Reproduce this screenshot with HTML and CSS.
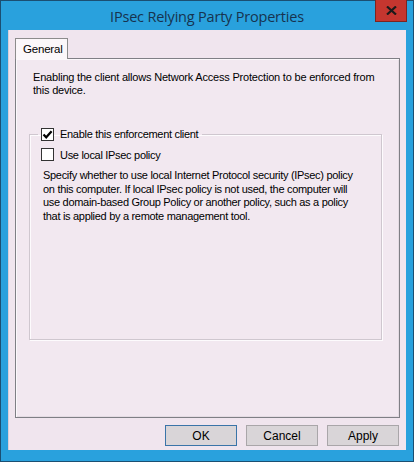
FILE: index.html
```html
<!DOCTYPE html>
<html>
<head>
<meta charset="utf-8">
<link rel="stylesheet" href="styles.css">
</head>
<body>
<div class="window">
  <div class="titlebar">
    <span class="title">IPsec Relying Party Properties</span>
    <div class="close"><svg width="11" height="9" viewBox="0 0 11 9"><path d="M1 0.5 L10 8.5 M10 0.5 L1 8.5" stroke="#1a1a1a" stroke-width="2.2"/></svg></div>
  </div>
  <div class="client">
    <div class="tabs"><div class="tab">General</div></div>
    <div class="panel">
      <p class="intro">Enabling the client allows Network Access Protection to be enforced from<br>this device.</p>
      <fieldset class="group">
        <legend class="legend"><span class="cb checked"><svg width="11" height="11" viewBox="0 0 11 11"><path d="M1.5 5.5 L4.2 8.3 L9.6 2.2" fill="none" stroke="#000" stroke-width="2.2"/></svg></span><span>Enable this enforcement client</span></legend>
        <div class="row"><span class="cb"></span><span>Use local IPsec policy</span></div>
        <p class="desc">Specify whether to use local Internet Protocol security (IPsec) policy<br>on this computer. If local IPsec policy is not used, the computer will<br>use domain-based Group Policy or another policy, such as a policy<br>that is applied by a remote management tool.</p>
      </fieldset>
    </div>
    <div class="buttons">
      <div class="btn default">OK</div>
      <div class="btn">Cancel</div>
      <div class="btn">Apply</div>
    </div>
  </div>
</div>
</body>
</html>
```
FILE: styles.css
```css
html, body {
  margin: 0;
  padding: 0;
  background: #2aa0dc;
}
.window {
  width: 414px;
  height: 462px;
  box-sizing: border-box;
  background: #29a1dd;
  border: 1px solid #1b4f72;
  display: flex;
  flex-direction: column;
  font-family: "Liberation Sans", Arial, sans-serif;
  font-size: 11px;
  letter-spacing: -0.3px;
  color: #000;
}
.titlebar {
  position: relative;
  height: 29px;
  display: flex;
  align-items: center;
  justify-content: center;
}
.title {
  font-family: "Open Sans", "Noto Sans", sans-serif;
  font-size: 14.5px;
  letter-spacing: -0.2px;
  color: #17334f;
  margin-top: 1px;
}
.close {
  position: absolute;
  right: 6px;
  top: -1px;
  width: 32px;
  height: 22px;
  box-sizing: border-box;
  background: #c4362f;
  border: 1px solid #7d2420;
  border-top: none;
  display: flex;
  align-items: center;
  justify-content: center;
}
.client {
  margin: 0 7px;
  height: 420px;
  background: #f0e5ee;
  padding: 8px 6px 0 6px;
  box-sizing: border-box;
  display: flex;
  flex-direction: column;
  border-left: 1px solid #d9cfd8;
}
.tabs {
  display: flex;
  height: 20px;
  position: relative;
  z-index: 1;
}
.tab {
  width: 53px;
  height: 21px;
  box-sizing: border-box;
  background: #fbf7fa;
  border: 1px solid #8c8c8c;
  border-bottom: none;
  padding: 4px 0 0 7px;
  font-size: 11.5px;
  letter-spacing: -0.2px;
}
.panel {
  height: 360px;
  box-sizing: border-box;
  border: 1px solid #7f7f85;
  background: #f2e8f0;
  box-shadow: inset 1px 1px 0 #fbf8fb, inset -1px -1px 0 #e4dbe3;
  padding: 12px 16px 0 17px;
}
.intro {
  margin: 0;
  line-height: 13px;
  white-space: nowrap;
  letter-spacing: -0.2px;
}
.group {
  margin: 30px 1px 0 -4px;
  padding: 0;
  height: 213px;
  box-sizing: border-box;
  border: 1px solid #cfc7cf;
  box-shadow: 1px 1px 0 #fdfbfd, inset 1px 1px 0 #fdfbfd;
}
.legend {
  margin-left: 8px;
  padding: 0 4px 0 3px;
  display: flex;
  align-items: center;
  gap: 6px;
  height: 14px;
}
.cb {
  width: 13px;
  height: 13px;
  box-sizing: border-box;
  border: 1px solid #333;
  background: #fff;
  display: inline-flex;
  align-items: center;
  justify-content: center;
}
.row {
  margin: 7px 0 0 11px;
  display: flex;
  align-items: center;
  gap: 6px;
}
.desc {
  margin: 8px 10px 0 13px;
  line-height: 13.6px;
  white-space: nowrap;
}
.buttons {
  display: flex;
  justify-content: flex-end;
  gap: 9px;
  margin-top: 7px;
  padding-right: 1px;
}
.btn {
  width: 72px;
  height: 21px;
  box-sizing: border-box;
  background: #d9d5d8;
  border: 1px solid #a9a6a9;
  display: flex;
  align-items: center;
  justify-content: center;
  font-size: 12px;
  letter-spacing: 0;
}
.btn.default {
  border-color: #3a74a8;
}
```
